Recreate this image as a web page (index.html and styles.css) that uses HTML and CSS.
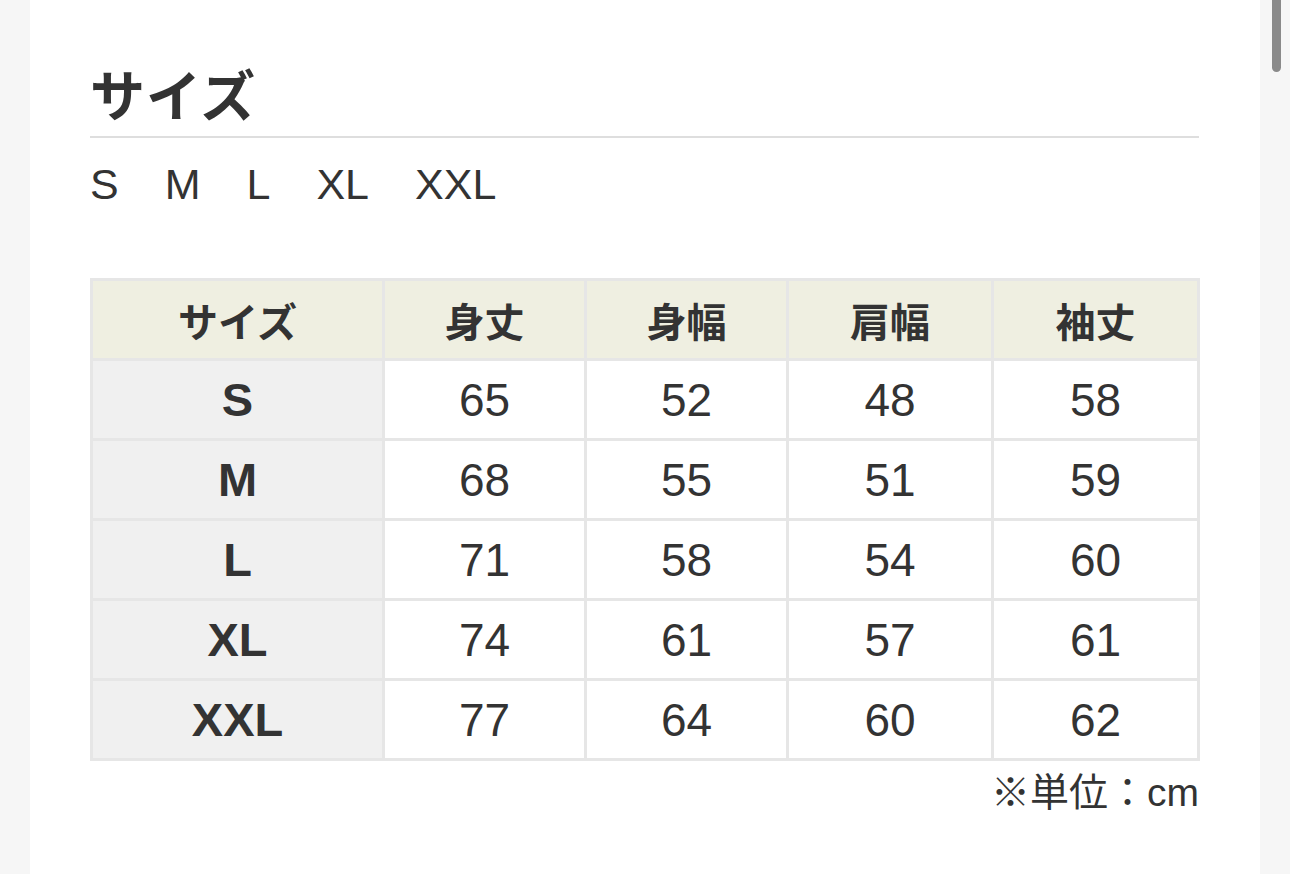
FILE: index.html
```html
<!DOCTYPE html>
<html lang="ja">
<head>
<meta charset="utf-8">
<title>サイズ</title>
<link rel="stylesheet" href="styles.css">
</head>
<body>
<div class="page">
  <section class="panel">
    <h2 class="title">サイズ</h2>
    <ul class="sizes">
      <li>S</li><li>M</li><li>L</li><li>XL</li><li>XXL</li>
    </ul>
    <table class="chart">
      <colgroup>
        <col class="c1"><col class="c2"><col class="c3"><col class="c4"><col class="c5">
      </colgroup>
      <thead>
        <tr><th>サイズ</th><th>身丈</th><th>身幅</th><th>肩幅</th><th>袖丈</th></tr>
      </thead>
      <tbody>
        <tr><th>S</th><td>65</td><td>52</td><td>48</td><td>58</td></tr>
        <tr><th>M</th><td>68</td><td>55</td><td>51</td><td>59</td></tr>
        <tr><th>L</th><td>71</td><td>58</td><td>54</td><td>60</td></tr>
        <tr><th>XL</th><td>74</td><td>61</td><td>57</td><td>61</td></tr>
        <tr><th>XXL</th><td>77</td><td>64</td><td>60</td><td>62</td></tr>
      </tbody>
    </table>
    <p class="note">※単位：cm</p>
  </section>
  <div class="scrollbar"></div>
</div>
</body>
</html>
```
FILE: styles.css
```css
html, body {
  margin: 0;
  padding: 0;
  background: #f6f6f6;
  height: 100%;
  overflow: hidden;
}
body {
  font-family: "Liberation Sans", "Noto Sans CJK JP", sans-serif;
  color: #333;
}
.page {
  padding: 0 30px;
  height: 874px;
}
.panel {
  background: #fff;
  height: 100%;
  padding: 62px 61px 0 60px;
  box-sizing: border-box;
}
.title {
  margin: 0;
  font-family: "Noto Sans CJK JP", sans-serif;
  font-weight: 700;
  font-size: 55px;
  line-height: 60px;
  padding-bottom: 14px;
  border-bottom: 2px solid #dedede;
  letter-spacing: 1px;
}
.sizes {
  list-style: none;
  margin: 0;
  padding: 0;
  display: flex;
  gap: 46px;
  font-size: 43px;
  line-height: 48px;
  margin-top: 22px;
  font-family: "Liberation Sans", sans-serif;
}
.chart {
  margin-top: 70px;
  width: 1107px;
  border-collapse: collapse;
  table-layout: fixed;
  border: 3px solid #e6e6e6;
}
.c1 { width: 292px; }
.c2 { width: 202px; }
.c3 { width: 202px; }
.c4 { width: 205px; }
.c5 { width: 206px; }
.chart th, .chart td {
  border: 3px solid #e6e6e6;
  height: 77px;
  padding: 0;
  text-align: center;
  vertical-align: middle;
}
.chart thead th {
  background: #efefe1;
  font-family: "Noto Sans CJK JP", sans-serif;
  font-weight: 700;
  font-size: 40px;
}
.chart tbody th {
  background: #f0f0f0;
  font-weight: 700;
  font-size: 47px;
}
.chart td {
  font-size: 46px;
  font-weight: 400;
}
.note {
  margin: 9px 0 0;
  text-align: right;
  font-family: "Liberation Sans", "Noto Sans CJK JP", sans-serif;
  font-size: 39px;
  line-height: 46px;
}
.scrollbar {
  position: fixed;
  top: 0;
  left: 1272px;
  width: 9px;
  height: 72px;
  background: #8a8a8a;
  border-radius: 0 0 5px 5px;
}
```
